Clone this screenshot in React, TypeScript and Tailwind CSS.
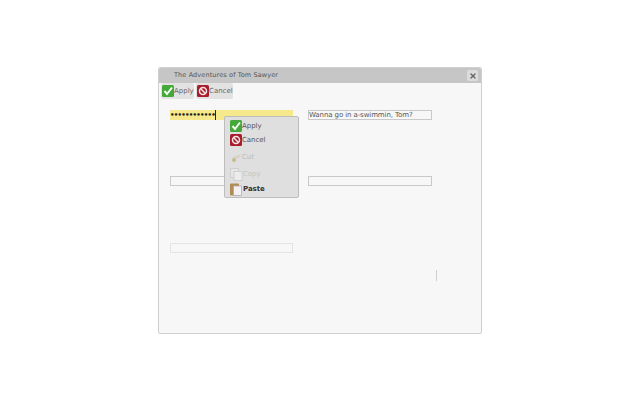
import { X } from "lucide-react";

const CheckIcon = () => (
  <svg width="12" height="12" viewBox="0 0 12 12" className="shrink-0">
    <rect width="12" height="12" rx="1.5" fill="#45a83a" />
    <path d="M2.5 6 L5 9 L10 2.5" fill="none" stroke="#f2fbef" strokeWidth="2" />
  </svg>
);

const CancelIcon = () => (
  <svg width="12" height="12" viewBox="0 0 12 12" className="shrink-0">
    <rect width="12" height="12" rx="1.5" fill="#a81c2c" />
    <circle cx="6" cy="6" r="3.5" fill="none" stroke="#f5e6e6" strokeWidth="1.5" />
    <path d="M3.5 3.5 L8.5 8.5" stroke="#f5e6e6" strokeWidth="1.5" />
  </svg>
);

const CutIcon = () => (
  <svg width="12" height="12" viewBox="0 0 12 12" className="shrink-0">
    <path d="M3 6 L10 3.5 L11 5.5 L6 8 Z" fill="#d6d2c4" />
    <circle cx="4" cy="9" r="2" fill="#c9b98f" />
  </svg>
);

const CopyIcon = () => (
  <svg width="13" height="13" viewBox="0 0 13 13" className="shrink-0">
    <rect x="0.5" y="0.5" width="8" height="9" fill="#e6e6e6" stroke="#cfcfcf" />
    <rect x="4" y="3.5" width="8" height="9" fill="#ececec" stroke="#cfcfcf" />
  </svg>
);

const PasteIcon = () => (
  <svg width="13" height="13" viewBox="0 0 13 13" className="shrink-0">
    <rect x="0" y="0.5" width="9" height="12" rx="1" fill="#b08d57" />
    <rect x="3.5" y="3" width="8" height="9.5" fill="#f4f1f4" stroke="#a9a4ad" strokeWidth="0.7" />
  </svg>
);

const Field = ({ value, faint }: { value?: string; faint?: boolean }) => (
  <div className={`h-[10px] whitespace-nowrap border bg-[#f7f7f7] text-[7px] leading-[8px] tracking-[-0.1px] text-[#555] ${faint ? "border-[#e4e4e4]" : "border-[#c9c9c9]"}`}>
    {value}
  </div>
);

const MenuItem = ({ icon, label, className }: { icon: React.ReactNode; label: string; className: string }) => (
  <div className={`flex items-center pl-[5px] text-[7px] leading-none tracking-[-0.05px] ${className}`}>
    {icon}
    <span>{label}</span>
  </div>
);

export default function App() {
  return (
    <div className="h-[400px] w-[640px] overflow-hidden bg-white pl-[158px] pt-[67px] font-['DejaVu_Sans',sans-serif]">
      <div className="relative h-[267px] w-[324px] rounded-[2px] border border-[#cfcfcf] bg-[#f7f7f7]">
        <div className="flex h-[15px] items-center justify-between rounded-t-[2px] bg-[#c6c6c6] pl-[15px] pr-[3px] text-[6.5px] tracking-[0.12px] text-[#555]">
          <span>The Adventures of Tom Sawyer</span>
          <span className="flex h-[11px] w-[11px] items-center justify-center rounded-[2px] bg-[#dcdcdc]">
            <X size={8} strokeWidth={4} className="text-[#666]" />
          </span>
        </div>

        <div className="flex gap-[2px] pl-[2px] text-[7px] text-[#666]">
          <div className="flex h-[16px] w-[33px] items-center rounded-[2px] bg-[#e2e2e2] pl-[1px]">
            <CheckIcon />
            <span>Apply</span>
          </div>
          <div className="flex h-[16px] w-[37px] items-center rounded-[2px] bg-[#e2e2e2] pl-[1px]">
            <CancelIcon />
            <span>Cancel</span>
          </div>
        </div>

        <div className="ml-[11px] mt-[11px] grid w-[262px] grid-cols-[123px_124px] gap-x-[15px]">
          <div className="flex h-[10px] items-center bg-[#f5e98b] text-[#222]">
            <span className="h-full whitespace-nowrap border-r border-[#222] text-[7px] font-bold leading-[10px] tracking-[-0.72px]">••••••••••••</span>
          </div>
          <Field value="Wanna go in a-swimmin, Tom?" />
          <div className="mt-[56px]">
            <Field />
          </div>
          <div className="mt-[56px]">
            <Field />
          </div>
          <div className="mt-[57px]">
            <Field faint />
          </div>
        </div>

        {/* stray cursor bar */}
        <div className="absolute left-[277px] top-[202px] h-[11px] w-px bg-[#cfcfcf]" />

        {/* context menu */}
        <div className="absolute left-[65px] top-[48px] h-[82px] w-[75px] rounded-[2px] border border-[#bdbdbd] bg-[#dfdfdf] pt-[3px]">
          <MenuItem icon={<CheckIcon />} label="Apply" className="h-[12px] text-[#555]" />
          <MenuItem icon={<CancelIcon />} label="Cancel" className="mt-[2px] h-[12px] text-[#555]" />
          <MenuItem icon={<CutIcon />} label="Cut" className="mt-[5px] h-[12px] text-[#bbb]" />
          <MenuItem icon={<CopyIcon />} label="Copy" className="mt-[5px] h-[13px] text-[#c4c4c4]" />
          <MenuItem icon={<PasteIcon />} label="Paste" className="mt-[2px] h-[13px] font-bold text-[#333]" />
        </div>
      </div>
    </div>
  );
}
